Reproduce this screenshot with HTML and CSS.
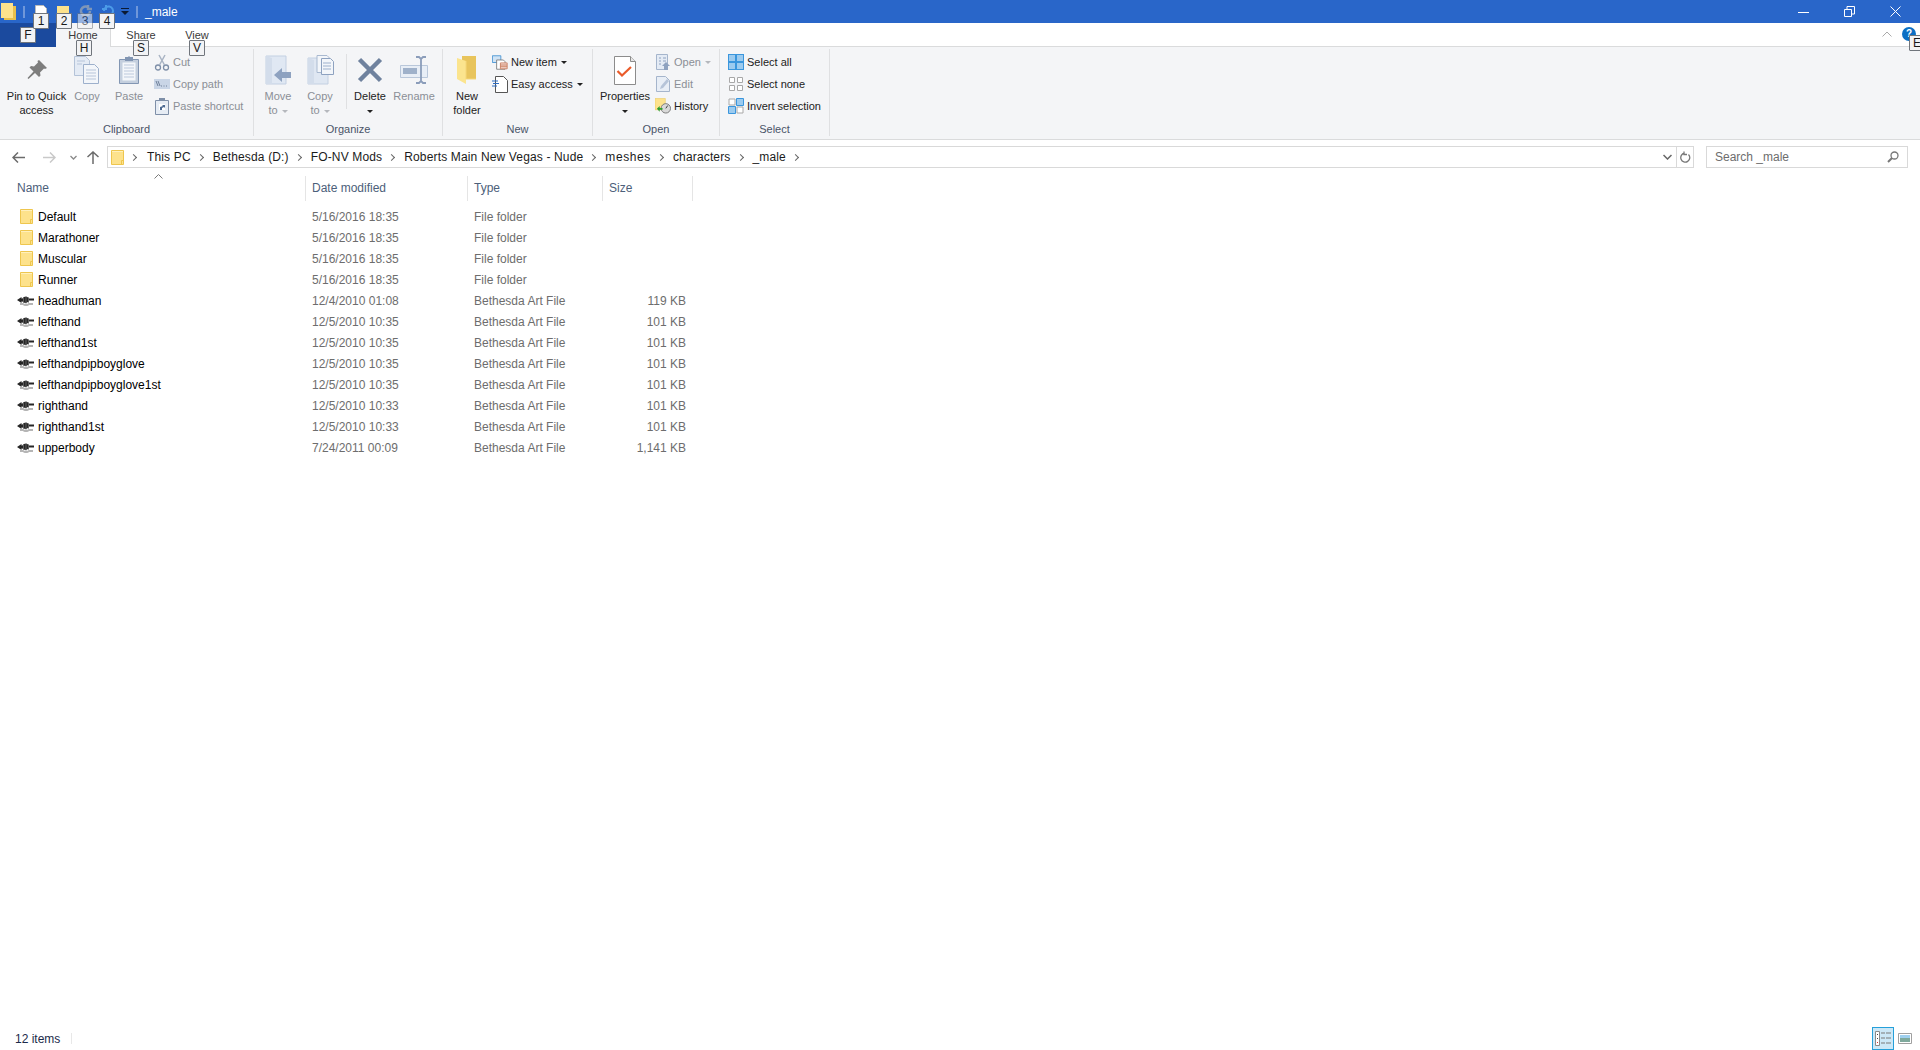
FILE: index.html
```html
<!DOCTYPE html>
<html lang="en">
<head>
<meta charset="utf-8">
<title>_male</title>
<link rel="stylesheet" href="styles.css">
</head>
<body>
<svg class="defs" width="0" height="0" aria-hidden="true">
  <symbol id="folder" viewBox="0 0 13 15">
    <path d="M.5.5h12v14H.500z" fill="#fde28c" stroke="#eec64e"/>
    <path d="M10.500 10.500v4M10.500 10.500h2" fill="none" stroke="#eec64e"/>
    <path d="M1 1h11v1H1z" fill="#fff0bd"/>
  </symbol>
  <symbol id="nif" viewBox="0 0 17 11">
    <path d="M3 9h3c2 1.500 4 1.500 6 0h4" fill="none" stroke="#b5b5b5" stroke-width="2"/>
    <path d="M0 5l4.500-3v1.500H5.500C6.500 1 11 1 12 3.500h5v2h-5C11 8.500 6.500 8.500 5.500 6.500H4.500V8z" fill="#262626"/>
    <path d="M6.500 2.500v5M9 1.500v7M11.500 2.500v5" stroke="#5e5e5e"/>
  </symbol>
</svg>

<div class="window">
  <header class="titlebar">
    <svg class="tb-folder" width="15" height="17" viewBox="0 0 15 17"><path d="M0 0h12v15H0z" fill="#fde28c"/><path d="M12 3h3v14H3v-2h9z" fill="#e8c04c"/></svg>
    <span class="tb-sep"></span>
    <svg class="tb-qa" width="12" height="14" viewBox="0 0 12 14"><path d="M.5.5h8l3 3v10H.500z" fill="#fff" stroke="#bbb"/><path d="M8 8h3v2H8z" fill="#e8562a"/></svg>
    <svg class="tb-qa2" width="13" height="12" viewBox="0 0 13 12"><path d="M0 0h12v12H0z" fill="#fde28c"/></svg>
    <svg class="tb-qa3" width="14" height="13" viewBox="0 0 14 13"><path d="M11 6a4.500 4.500 0 1 1-2-3.700M9 0v4h4" fill="none" stroke="#7f96b8" stroke-width="2.500"/></svg>
    <svg class="tb-qa4" width="14" height="13" viewBox="0 0 14 13"><path d="M3 6a4.500 4.500 0 1 1 2 3.700M5 0v4H1" fill="none" stroke="#4b9be8" stroke-width="2"/></svg>
    <svg class="tb-drop" width="8" height="7" viewBox="0 0 8 7"><path d="M0 0h8v1H0zM0 3h8L4 7z" fill="#0b1a33"/></svg>
    <span class="tb-sep tb-sep2"></span>
    <span class="tb-title">_male</span>
    <span class="tb-spacer"></span>
    <svg class="wc wc-min" width="11" height="12" viewBox="0 0 11 12"><path d="M0 6.500h11" stroke="#fff"/></svg>
    <svg class="wc wc-max" width="11" height="11" viewBox="0 0 11 11"><path d="M.5 3.500h7v7h-7zM3 3.500V.500h7.500v7.500H7.500" fill="none" stroke="#fff"/></svg>
    <svg class="wc wc-close" width="11" height="11" viewBox="0 0 11 11"><path d="M.5.500l10 10M10.500.500l-10 10" stroke="#fff"/></svg>
  </header>

  <nav class="tabs">
    <div class="tab tab-file"></div>
    <div class="tab tab-home">Home</div>
    <div class="tab tab-share">Share</div>
    <div class="tab tab-view">View</div>
    <span class="tb-spacer"></span>
    <svg class="tab-chev" width="10" height="6" viewBox="0 0 10 6"><path d="M.5 5.500L5 1l4.500 4.500" fill="none" stroke="#aaa"/></svg>
    <span class="help">?</span>
  </nav>

  <section class="ribbon">
    <div class="group g-clip">
      <div class="g-body">
        <div class="big w-pin">
          <div class="big-ico"><svg width="24" height="24" viewBox="0 0 24 24"><path d="M14 2l8 8-2 1-1-.500-4 4 .500 3-1.500 1.500-4-4-6.500 6-1-1 6-6.500-4-4L6 8l3 .500 4-4L12.500 3z" fill="#7d7d7d"/></svg></div>
          <div class="big-txt">Pin to Quick<br>access</div>
        </div>
        <div class="big w-copy off">
          <div class="big-ico"><svg width="26" height="30" viewBox="0 0 26 30"><path d="M.5 1.500h11l4 4v15H.500z" fill="#e4ebf5" stroke="#b4c3d8"/><path d="M9.500 9.500h11l4 4v15h-15z" fill="#f3f6fa" stroke="#9db0cc"/><path d="M12 15h10M12 18h10M12 21h10M12 24h10M3 6h8M3 9h5" stroke="#b7c5da"/></svg></div>
          <div class="big-txt">Copy</div>
        </div>
        <div class="big w-paste off">
          <div class="big-ico"><svg width="22" height="30" viewBox="0 0 22 30"><path d="M1.500 4.500h19v24h-19z" fill="#c4cfde" stroke="#8296b3"/><path d="M4.500 7.500h13v18h-13z" fill="#f3f6fa"/><path d="M6 10h10M6 13h10M6 16h10M6 19h10M6 22h10" stroke="#bcc9dc"/><path d="M7 4V2h3l1-1 1 1h3v4H7z" fill="#8296b3"/></svg></div>
          <div class="big-txt">Paste</div>
        </div>
        <div class="smalls">
          <div class="small off"><svg class="s-ico" width="16" height="17" viewBox="0 0 16 17"><circle cx="4" cy="13.500" r="2.500" fill="none" stroke="#7e8fa8" stroke-width="1.300"/><circle cx="12" cy="13.500" r="2.500" fill="none" stroke="#7e8fa8" stroke-width="1.300"/><path d="M5.500 11L11 1M10.500 11L5 1" stroke="#a9b4c4" stroke-width="1.500"/></svg>Cut</div>
          <div class="small off"><svg class="s-ico" width="16" height="10" viewBox="0 0 16 10"><path d="M0 0h16v10H0z" fill="#c9d5e6"/><path d="M2 2l2 5M4 2l2 5M7 7h1M9.500 7h1M12 7h1" stroke="#6f809a"/></svg>Copy path</div>
          <div class="small off"><svg class="s-ico" width="14" height="17" viewBox="0 0 14 17"><path d="M.5 2.500h13v14H.500z" fill="#e6ecf4" stroke="#7e8fa8"/><path d="M4 0h6v3H4z" fill="#7e8fa8"/><path d="M4 6h6v6H4z" fill="#fff"/><path d="M5 12V9l3-1-1-1h3v3l-1-1-2 1v2z" fill="#4d6a92"/></svg>Paste shortcut</div>
        </div>
      </div>
      <div class="g-label">Clipboard</div>
    </div>

    <div class="group g-org">
      <div class="g-body">
        <div class="big w-move off">
          <div class="big-ico"><svg width="27" height="30" viewBox="0 0 27 30"><path d="M1 1h20v28H1z" fill="#e0e8f3" stroke="#c3d0e2"/><path d="M1 1l6 2v26H1z" fill="#d3ddeb"/><path d="M9 20l8-7v4h9v6h-9v4z" fill="#8ea2c0"/></svg></div>
          <div class="big-txt">Move<br>to<i class="caret caret-off"></i></div>
        </div>
        <div class="big w-copyto off">
          <div class="big-ico"><svg width="27" height="30" viewBox="0 0 27 30"><path d="M1 3h20v26H1z" fill="#dfe7f2" stroke="#c3d0e2"/><path d="M1 3l6 2v24H1z" fill="#d3ddeb"/><path d="M10 .500h10l3 3v14H10z" fill="#f3f6fa" stroke="#a9b9d0"/><path d="M14.500 3.500h9l3 3v13h-12z" fill="#f3f6fa" stroke="#8ea2c0"/><path d="M16 8h8M16 11h8M16 14h8" stroke="#9db0cc"/></svg></div>
          <div class="big-txt">Copy<br>to<i class="caret caret-off"></i></div>
        </div>
        <span class="vsep"></span>
        <div class="big w-del">
          <div class="big-ico"><svg width="26" height="26" viewBox="0 0 26 26"><path d="M2.500 2.500l21 21M23.500 2.500l-21 21" stroke="#6f829e" stroke-width="4.500"/></svg></div>
          <div class="big-txt">Delete<br><i class="caret"></i></div>
        </div>
        <div class="big w-ren off">
          <div class="big-ico"><svg width="28" height="28" viewBox="0 0 28 28"><path d="M.5 9.500h27v12H.500z" fill="#e8eef6" stroke="#b9c7da"/><path d="M3 12h14v6H3z" fill="#9fb1ca"/><path d="M16 1h3l2 2 2-2h3M16 27h3l2-2 2 2h3M21 3v22" fill="none" stroke="#8b9dba" stroke-width="1.800"/></svg></div>
          <div class="big-txt">Rename</div>
        </div>
      </div>
      <div class="g-label">Organize</div>
    </div>

    <div class="group g-new">
      <div class="g-body">
        <div class="big w-nf">
          <div class="big-ico"><svg width="20" height="28" viewBox="0 0 20 28"><path d="M5 0h14v23H5z" fill="#e8c45c"/><path d="M0 2l9 3v23l-9-5z" fill="#fbe48e"/><path d="M9 5v18h10" fill="none" stroke="#f5d778"/></svg></div>
          <div class="big-txt">New<br>folder</div>
        </div>
        <div class="smalls">
          <div class="small"><svg class="s-ico s-wide" width="19" height="17" viewBox="0 0 19 17"><path d="M.5.500h10v8H.500z" fill="#cfe3f5" stroke="#3f8fd0"/><path d="M5.500 5.500h8l2 2v9h-10z" fill="#fff" stroke="#777"/><path d="M10 9h8v7h-8z" fill="#f4d8cf" stroke="#c77a5a"/><path d="M10 11.500h8M10 13.500h8" stroke="#c77a5a"/></svg>New item<i class="caret caret-in"></i></div>
          <div class="small"><svg class="s-ico s-wide" width="16" height="17" viewBox="0 0 16 17"><path d="M3.500.500h8l4 4v12h-12z" fill="#fff" stroke="#555"/><path d="M0 5h6M1 7.500h6M0 10h5" stroke="#2b6cc4"/></svg>Easy access<i class="caret caret-in"></i></div>
        </div>
      </div>
      <div class="g-label">New</div>
    </div>

    <div class="group g-open">
      <div class="g-body">
        <div class="big w-prop">
          <div class="big-ico"><svg width="22" height="29" viewBox="0 0 22 29"><path d="M.5.500h16l5 5v23H.500z" fill="#fff" stroke="#8c8c8c"/><path d="M16.500.500v5h5" fill="#e6e6e6" stroke="#8c8c8c"/><path d="M3.500 15l4.500 4.500 9-8.500" fill="none" stroke="#ea5b2a" stroke-width="2.200"/></svg></div>
          <div class="big-txt">Properties<br><i class="caret"></i></div>
        </div>
        <div class="smalls">
          <div class="small off"><svg class="s-ico" width="14" height="16" viewBox="0 0 14 16"><path d="M.5.500h11v15H.500z" fill="#e4ebf5" stroke="#a5b5cc"/><path d="M3 4h2M7 4h3M3 7h2M7 7h3M3 10h2" stroke="#8ea2c0"/><path d="M10 8l4 4h-2v4H8v-4H6z" fill="#8ea2c0"/></svg>Open<i class="caret caret-in caret-off"></i></div>
          <div class="small off"><svg class="s-ico" width="14" height="16" viewBox="0 0 14 16"><path d="M.5.500h9l4 4v11H.500z" fill="#e8eef6" stroke="#a5b5cc"/><path d="M4 13l1-3 6-7 2 2-6 7z" fill="#b6c4d8"/></svg>Edit</div>
          <div class="small"><svg class="s-ico s-hist" width="17" height="16" viewBox="0 0 17 16"><path d="M0 0h11v12H0z" fill="#fde28c" stroke="#e5c14f" stroke-width=".5"/><circle cx="11.500" cy="10.500" r="5" fill="#d9d9d9" stroke="#777"/><path d="M11.500 10.500l2-3" stroke="#333"/><path d="M2 11l3-3v2h3v2H5v2z" fill="#2f9e2f"/></svg>History</div>
        </div>
      </div>
      <div class="g-label">Open</div>
    </div>

    <div class="group g-sel">
      <div class="g-body">
        <div class="smalls">
          <div class="small"><svg class="s-ico" width="16" height="16" viewBox="0 0 16 16"><path d="M0 0h16v16H0z" fill="#3a96dd"/><path d="M1 1h6v6H1zM9 1h6v6H9zM1 9h6v6H1zM9 9h6v6H9z" fill="#9ccbef"/></svg>Select all</div>
          <div class="small"><svg class="s-ico" width="16" height="16" viewBox="0 0 16 16"><path d="M1.500 1.500h5v5h-5zM9.500 1.500h5v5h-5zM1.500 9.500h5v5h-5zM9.500 9.500h5v5h-5z" fill="#fff" stroke="#a8a8a8"/></svg>Select none</div>
          <div class="small"><svg class="s-ico" width="16" height="16" viewBox="0 0 16 16"><path d="M1 1h6v6H1zM9 9h6v6H9z" fill="#fff" stroke="#a8a8a8"/><path d="M8.500 .500h7v7h-7zM.500 8.500h7v7h-7z" fill="#9ccbef" stroke="#3a96dd"/></svg>Invert selection</div>
        </div>
      </div>
      <div class="g-label">Select</div>
    </div>
  </section>

  <div class="addr">
    <svg class="nav n-back" width="13" height="11" viewBox="0 0 13 11"><path d="M6 .500L1 5.500l5 5M1 5.500h12" fill="none" stroke="#6b6b6b" stroke-width="1.500"/></svg>
    <svg class="nav n-fwd" width="13" height="11" viewBox="0 0 13 11"><path d="M7 .500l5 5-5 5M12 5.500H0" fill="none" stroke="#c9c9c9" stroke-width="1.500"/></svg>
    <svg class="nav n-down" width="7" height="5" viewBox="0 0 7 5"><path d="M.5 1l3 3 3-3" fill="none" stroke="#8a8a8a" stroke-width="1.300"/></svg>
    <svg class="nav n-up" width="12" height="13" viewBox="0 0 12 13"><path d="M.5 6l5.500-5 5.500 5M6 1v12" fill="none" stroke="#6b6b6b" stroke-width="1.500"/></svg>
    <div class="path">
      <svg class="path-folder" width="13" height="15"><use href="#folder"/></svg>
      <i class="chev c1"></i><span class="crumb">This PC</span>
      <i class="chev"></i><span class="crumb">Bethesda (D:)</span>
      <i class="chev"></i><span class="crumb">FO-NV Mods</span>
      <i class="chev"></i><span class="crumb">Roberts Main New Vegas - Nude</span>
      <i class="chev"></i><span class="crumb crumb-wide">meshes</span>
      <i class="chev"></i><span class="crumb">characters</span>
      <i class="chev"></i><span class="crumb">_male</span>
      <i class="chev"></i>
      <span class="tb-spacer"></span>
      <svg class="path-drop" width="9" height="6" viewBox="0 0 9 6"><path d="M.5 1l4 4 4-4" fill="none" stroke="#666" stroke-width="1.500"/></svg>
      <span class="path-refresh"><svg width="11" height="12" viewBox="0 0 11 12"><path d="M8.500 3.500a4.500 4.500 0 1 1-4-1.300M4 .500v3h3" fill="none" stroke="#777" stroke-width="1.300"/></svg></span>
    </div>
    <div class="search">
      <span>Search _male</span>
      <svg width="12" height="12" viewBox="0 0 12 12"><circle cx="7.500" cy="4.500" r="3.500" fill="none" stroke="#777" stroke-width="1.300"/><path d="M5 7l-4 4" stroke="#777" stroke-width="2"/></svg>
    </div>
  </div>

  <main class="list">
    <div class="row head">
      <div class="c-name">Name</div>
      <div class="c-date">Date modified</div>
      <div class="c-type">Type</div>
      <div class="c-size">Size</div>
      <svg class="sort" width="9" height="5" viewBox="0 0 9 5"><path d="M.5 4.500l4-4 4 4" fill="none" stroke="#7a7a7a"/></svg>
    </div>
    <div class="rows">
      <div class="row"><div class="c-name"><svg class="f-ico" width="13" height="15"><use href="#folder"/></svg>Default</div><div class="c-date">5/16/2016 18:35</div><div class="c-type">File folder</div><div class="c-size"></div></div>
      <div class="row"><div class="c-name"><svg class="f-ico" width="13" height="15"><use href="#folder"/></svg>Marathoner</div><div class="c-date">5/16/2016 18:35</div><div class="c-type">File folder</div><div class="c-size"></div></div>
      <div class="row"><div class="c-name"><svg class="f-ico" width="13" height="15"><use href="#folder"/></svg>Muscular</div><div class="c-date">5/16/2016 18:35</div><div class="c-type">File folder</div><div class="c-size"></div></div>
      <div class="row"><div class="c-name"><svg class="f-ico" width="13" height="15"><use href="#folder"/></svg>Runner</div><div class="c-date">5/16/2016 18:35</div><div class="c-type">File folder</div><div class="c-size"></div></div>
      <div class="row"><div class="c-name"><svg class="n-ico" width="17" height="11"><use href="#nif"/></svg>headhuman</div><div class="c-date">12/4/2010 01:08</div><div class="c-type">Bethesda Art File</div><div class="c-size">119 KB</div></div>
      <div class="row"><div class="c-name"><svg class="n-ico" width="17" height="11"><use href="#nif"/></svg>lefthand</div><div class="c-date">12/5/2010 10:35</div><div class="c-type">Bethesda Art File</div><div class="c-size">101 KB</div></div>
      <div class="row"><div class="c-name"><svg class="n-ico" width="17" height="11"><use href="#nif"/></svg>lefthand1st</div><div class="c-date">12/5/2010 10:35</div><div class="c-type">Bethesda Art File</div><div class="c-size">101 KB</div></div>
      <div class="row"><div class="c-name"><svg class="n-ico" width="17" height="11"><use href="#nif"/></svg>lefthandpipboyglove</div><div class="c-date">12/5/2010 10:35</div><div class="c-type">Bethesda Art File</div><div class="c-size">101 KB</div></div>
      <div class="row"><div class="c-name"><svg class="n-ico" width="17" height="11"><use href="#nif"/></svg>lefthandpipboyglove1st</div><div class="c-date">12/5/2010 10:35</div><div class="c-type">Bethesda Art File</div><div class="c-size">101 KB</div></div>
      <div class="row"><div class="c-name"><svg class="n-ico" width="17" height="11"><use href="#nif"/></svg>righthand</div><div class="c-date">12/5/2010 10:33</div><div class="c-type">Bethesda Art File</div><div class="c-size">101 KB</div></div>
      <div class="row"><div class="c-name"><svg class="n-ico" width="17" height="11"><use href="#nif"/></svg>righthand1st</div><div class="c-date">12/5/2010 10:33</div><div class="c-type">Bethesda Art File</div><div class="c-size">101 KB</div></div>
      <div class="row"><div class="c-name"><svg class="n-ico" width="17" height="11"><use href="#nif"/></svg>upperbody</div><div class="c-date">7/24/2011 00:09</div><div class="c-type">Bethesda Art File</div><div class="c-size">1,141 KB</div></div>
    </div>
  </main>

  <footer class="status">
    <span class="count">12 items</span>
    <span class="st-sep"></span>
    <span class="tb-spacer"></span>
    <span class="view-btn view-on"><svg width="17" height="15" viewBox="0 0 17 15"><path d="M.5.500h4v14h-4z" fill="#fff" stroke="#8a8a8a"/><path d="M2 3h1v1H2zM2 7h1v1H2z" fill="#444"/><path d="M2 11h1v1H2z" fill="#d33"/><path d="M6 2h4M11 2h5M6 7h4M11 7h5M6 12h4M11 12h5" stroke="#7a7a7a" stroke-width="1.200"/></svg></span>
    <span class="view-btn view-tile"><svg width="14" height="11" viewBox="0 0 14 11"><path d="M.5.500h13v10H.500z" fill="#fff" stroke="#a0a0a0"/><path d="M2 2h10v3H2z" fill="#9fd0ef"/><path d="M2 5h10v4H2z" fill="#7fa99c"/></svg></span>
  </footer>

  <span class="key k-f">F</span>
  <span class="key k-1">1</span>
  <span class="key k-2">2</span>
  <span class="key k-3 key-off">3</span>
  <span class="key k-4">4</span>
  <span class="key k-h">H</span>
  <span class="key k-s">S</span>
  <span class="key k-v">V</span>
  <span class="key k-e">E</span>
</div>
</body>
</html>
```
FILE: styles.css
```css
* { box-sizing: border-box; }
html, body { margin: 0; padding: 0; height: 100%; }
body { font: 12px/14px "Liberation Sans", Arial, sans-serif; color: #000; background: #fff; overflow: hidden; }
.defs { display: block; height: 0; }
.window { position: relative; height: 1050px; display: flex; flex-direction: column; }
.tb-spacer { flex: 1; }

/* title bar */
.titlebar { height: 23px; background: #2966c9; display: flex; align-items: center; color: #fff; flex: none; }
.tb-folder { margin: 0 0 0 1px; }
.tb-sep { width: 2px; height: 12px; background: #6f97da; margin-left: 7px; }
.tb-qa { margin-left: 10px; }
.tb-qa2 { margin-left: 10px; }
.tb-qa3 { margin-left: 9px; }
.tb-qa4 { margin-left: 8px; }
.tb-drop { margin-left: 6px; }
.tb-sep2 { margin-left: 7px; }
.tb-title { margin-left: 7px; }
.wc-min { margin-right: 35px; }
.wc-max { margin-right: 35px; }
.wc-close { margin-right: 19px; }

/* tabs */
.tabs { height: 24px; display: flex; align-items: stretch; border-bottom: 1px solid #dadbdc; flex: none; }
.tab { display: flex; align-items: center; justify-content: center; color: #3a3a3a; font-size: 11px; }
.tab-file { width: 56px; background: #1b4a9e; margin-bottom: -1px; }
.tab-home { width: 55px; background: #f4f5f7; margin-bottom: -1px; border-right: 1px solid #dadbdc; }
.tab-share { width: 60px; }
.tab-view { width: 52px; }
.tab-chev { align-self: center; margin-right: 10px; margin-top: -2px; }
.help { align-self: flex-start; width: 14px; height: 14px; margin: 4px 4px 0 0; border-radius: 50%; background: #0b6fc4; color: #fff; font-size: 10px; line-height: 14px; text-align: center; font-weight: bold; }

/* ribbon */
.ribbon { height: 93px; background: #f4f5f7; border-bottom: 1px solid #dadbdc; display: flex; flex: none; }
.group { height: 87px; margin-top: 2px; border-right: 1px solid #dfe0e2; display: flex; flex-direction: column; flex: none; font-size: 11px; color: #222; }
.g-clip { width: 254px; }
.g-org { width: 189px; }
.g-new { width: 150px; }
.g-open { width: 127px; }
.g-sel { width: 110px; }
.g-clip .g-body { padding-left: 5px; }
.g-org .g-body { padding-left: 3px; }
.g-new .g-body { padding-left: 1px; }
.g-open .g-body { padding-left: 2px; }
.g-sel .g-body { padding-left: 6px; }
.g-open .smalls { margin-left: 0; }
.g-body { height: 73px; padding-top: 2px; display: flex; }
.g-label { text-align: center; color: #4a5468; line-height: 14px; }
.big { display: flex; flex-direction: column; align-items: center; text-align: center; flex: none; }
.big-ico { height: 38px; display: flex; align-items: center; justify-content: center; }
.big-txt { line-height: 14px; white-space: nowrap; }
.w-pin { width: 63px; }
.w-copy { width: 38px; }
.w-paste { width: 46px; }
.w-move { width: 42px; }
.w-copyto { width: 42px; }
.w-del { width: 46px; }
.w-ren { width: 42px; }
.w-nf { width: 46px; }
.w-prop { width: 60px; }
.vsep { width: 1px; height: 55px; background: #dfe0e2; margin: 3px 0 0 5px; flex: none; }
.off { color: #8b8f96; }
.smalls { display: flex; flex-direction: column; margin-left: 2px; }
.small { height: 22px; display: flex; align-items: center; white-space: nowrap; }
.s-ico { margin-right: 3px; flex: none; width: 16px; }
.s-wide { margin-right: 3px; }
.caret { display: inline-block; width: 0; height: 0; border: 3px solid transparent; border-top-color: #222; border-bottom: 0; vertical-align: middle; }
.caret-off { border-top-color: #b5b8bd; margin-left: 4px; }
.caret-in { margin-left: 4px; }

/* address bar */
.addr { height: 32px; display: flex; align-items: center; flex: none; padding-top: 2px; }
.nav { flex: none; }
.n-back { margin-left: 12px; }
.n-fwd { margin-left: 18px; }
.n-down { margin-left: 14px; }
.n-up { margin-left: 10px; }
.path { margin-left: 8px; width: 1587px; height: 22px; border: 1px solid #d9d9d9; display: flex; align-items: center; flex: none; color: #1b1b1b; }
.path-folder { margin-left: 3px; flex: none; }
.crumb { letter-spacing: .15px; }
.crumb-wide { letter-spacing: .6px; }
.chev { width: 5px; height: 5px; border-top: 1px solid #666; border-right: 1px solid #666; transform: rotate(45deg); flex: none; margin: 0 10px 0 7px; }
.c1 { margin-left: 7px; margin-right: 11px; }
.path-drop { margin-right: 4px; }
.path-refresh { width: 17px; height: 20px; border-left: 1px solid #d9d9d9; display: flex; align-items: center; justify-content: center; }
.search { margin-left: 12px; width: 202px; height: 22px; border: 1px solid #d9d9d9; display: flex; align-items: center; justify-content: space-between; padding: 0 8px; color: #6d6d6d; flex: none; }

/* file list */
.list { flex: 1; padding-top: 1px; }
.row { display: grid; grid-template-columns: 306px 162px 135px 90px; height: 21px; align-items: center; }
.head { position: relative; height: 26px; margin-top: 2px; color: #4c607a; }
.head > div { height: 25px; line-height: 25px; border-right: 1px solid #e5e5e5; }
.head .c-name { padding-left: 17px; }
.head .c-date, .head .c-type { padding-left: 6px; color: #4c607a; }
.head .c-size { padding-left: 6px; text-align: left; color: #4c607a; }
.sort { position: absolute; left: 154px; top: -1px; }
.rows { padding-top: 5px; }
.c-name { display: flex; align-items: center; }
.c-date, .c-type { padding-left: 6px; color: #6d6d6d; }
.c-size { text-align: right; padding-right: 7px; color: #6d6d6d; }
.f-ico { margin: 0 5px 0 20px; flex: none; }
.n-ico { margin: 0 4px 0 17px; flex: none; }

/* status bar */
.status { height: 26px; display: flex; align-items: center; flex: none; color: #1b2a4a; padding-top: 2px; }
.count { margin: 2px 0 0 15px; }
.st-sep { width: 1px; height: 11px; background: #e8e8e8; margin-left: 11px; }
.view-btn { display: flex; align-items: center; justify-content: center; }
.view-on { width: 22px; height: 23px; background: #cce8f7; border: 1px solid #26a0da; margin-top: 1px; }
.view-tile { margin: 1px 8px 0 4px; width: 14px; }

/* key tips */
.key { position: absolute; width: 16px; height: 16px; background: #f2f3f5; border: 1px solid #70757c; border-radius: 1px; color: #1a1a1a; font-size: 12px; line-height: 14px; text-align: center; }
.key-off { opacity: .55; }
.k-f { left: 20px; top: 27px; }
.k-1 { left: 33px; top: 13px; }
.k-2 { left: 56px; top: 13px; }
.k-3 { left: 77px; top: 13px; }
.k-4 { left: 99px; top: 13px; }
.k-h { left: 76px; top: 40px; }
.k-s { left: 133px; top: 40px; }
.k-v { left: 189px; top: 40px; }
.k-e { left: 1909px; top: 35px; width: 16px; }
```
